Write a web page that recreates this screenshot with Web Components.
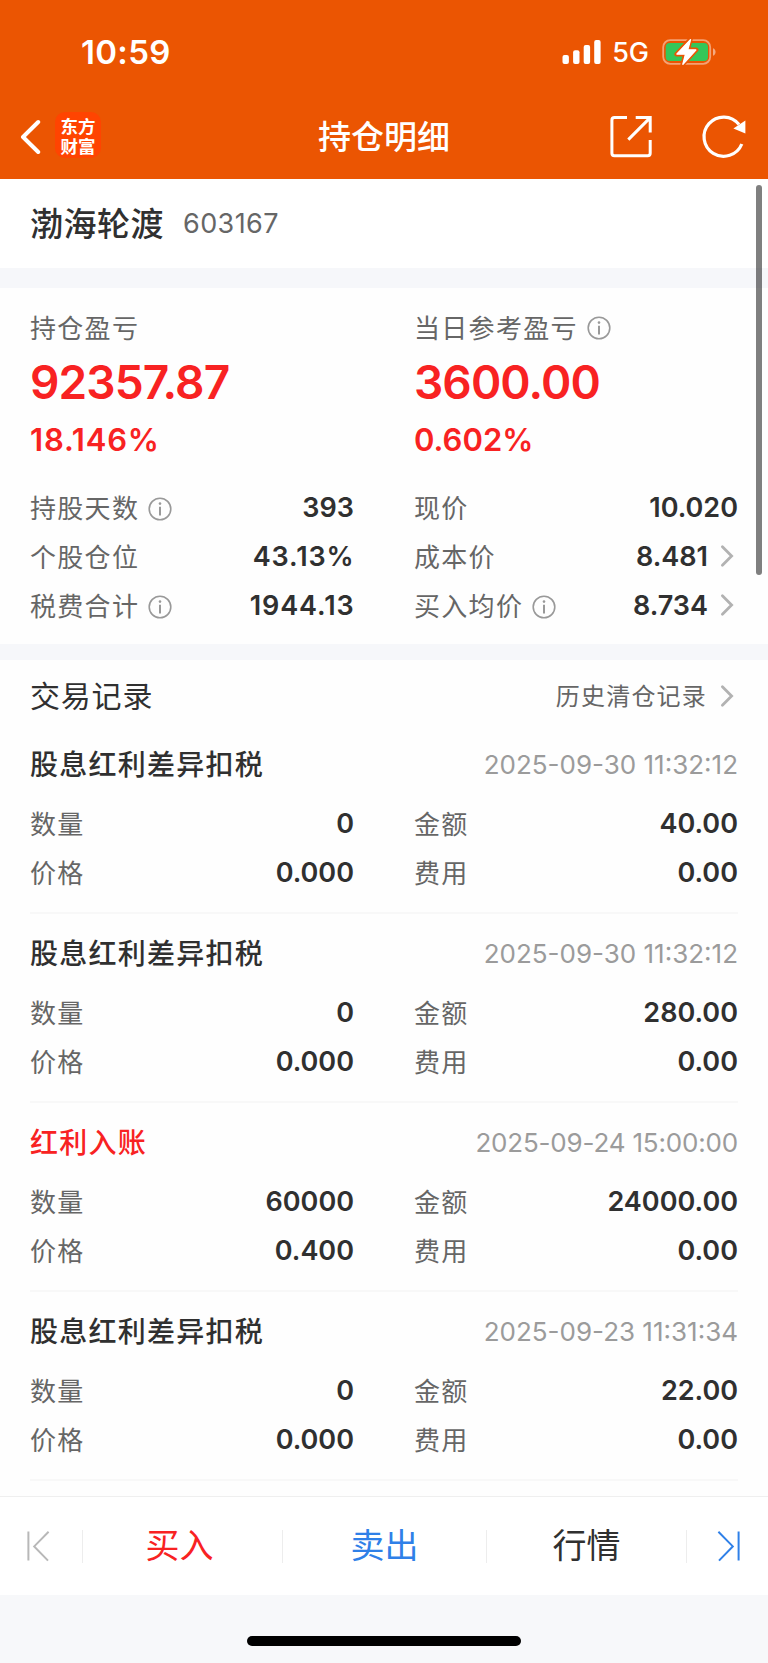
<!DOCTYPE html>
<html lang="zh-CN">
<head>
<meta charset="utf-8">
<meta name="viewport" content="width=device-width, initial-scale=1">
<title>持仓明细</title>
<style>
  :root {
    --brand: #eb5502;
    --red: #f82222;
    --blue: #2f80e8;
    --ink: #303030;
    --label: #666;
    --muted: #9b9b9b;
    --line: #f4f4f4;
    --band: #f6f7fa;
  }
  body {
    margin: 0;
    background: #fefefe;
    color: var(--ink);
    font-family: Inter, "Noto Sans CJK SC", sans-serif;
  }
</style>
</head>
<body>

<position-page></position-page>

<script>

const define = (name, markup) => {
  customElements.define(name, class extends HTMLElement {
    constructor() {
      super();
      this.attachShadow({ mode: "open" }).innerHTML = markup;
    }
  });
};

define("info-icon", `
  <style>
    :host { display: block; width: 24px; height: 24px; }
    svg { display: block; }
  </style>
  <svg width="24" height="24" viewBox="0 0 24 24" fill="none" stroke="#999" stroke-width="1.6">
    <circle cx="12" cy="12" r="10.8"/>
    <path d="M12 9.8V18.6" stroke-width="2"/>
    <circle cx="12" cy="6.6" r="1.3" fill="#999" stroke="none"/>
  </svg>
`);

define("chevron-icon", `
  <style>
    :host { display: block; width: 18px; height: 24px; }
    svg { display: block; }
  </style>
  <svg width="18" height="24" viewBox="0 0 18 24" fill="none" stroke="#b2b2b2" stroke-width="2.8" stroke-linecap="round">
    <path d="M2.4 2.8L11.6 12L2.4 21.2"/>
  </svg>
`);

define("status-bar", `
  <style>
    :host { display: flex; box-sizing: border-box; height: 94px; padding: 9px 51px 0 81px; align-items: center; justify-content: space-between; color: #fff; }
    .time { font-size: 33px; font-weight: 600; letter-spacing: 0.3px; }
    .right { display: flex; align-items: center; }
    .net { margin: 2px 12px 0 11px; font-size: 27px; font-weight: 500; }
    svg { display: block; }
  </style>
  <span class="time">10:59</span>
  <div class="right">
    <svg width="40" height="26" viewBox="0 0 40 26" fill="#fff">
      <rect x="1.5" y="16" width="6.4" height="9" rx="2"/>
      <rect x="12.1" y="11.3" width="6.4" height="13.7" rx="2"/>
      <rect x="22.7" y="6" width="6.4" height="19" rx="2"/>
      <rect x="33.2" y="1" width="6.4" height="24" rx="2"/>
    </svg>
    <span class="net">5G</span>
    <svg width="56" height="30" viewBox="661 36 56 30">
      <rect x="663.2" y="39.2" width="47" height="23.6" rx="7" fill="none" stroke="#fff" stroke-opacity=".45" stroke-width="1.8"/>
      <rect x="665.7" y="42" width="42.3" height="18" rx="4" fill="#34c759"/>
      <path d="M713 47.2C716.4 48.4 716.4 53.6 713 54.8Z" fill="#fff" fill-opacity=".5"/>
      <path d="M690.5 38.2L676.6 53.2H685.4L682.6 63.6L696.2 48.8H687.8Z" fill="#fff" stroke="#eb5502" stroke-width="4.5" stroke-linejoin="round" paint-order="stroke"/>
      <path d="M690.5 38.7L677 53H685.6L682.9 63.2L695.8 49H687.6Z" fill="#fff" stroke="#fff" stroke-width="1.4" stroke-linejoin="round"/>
    </svg>
  </div>
`);

define("nav-bar", `
  <style>
    :host { display: grid; grid-template-columns: 1fr auto 1fr; height: 85px; padding: 0 20px; align-items: center; color: #fff; }
    .left, .right { display: flex; align-items: center; }
    .right { justify-content: flex-end; gap: 46px; margin-right: 2px; }
    .title { padding-bottom: 4px; font-size: 33px; font-weight: 500; }
    .logo { display: flex; flex-direction: column; box-sizing: border-box; justify-content: center; width: 46px; height: 46px; margin: -3px 0 0 14px; padding-top: 3px; border-radius: 10px; background: #ff4401; text-align: center; font-size: 17.5px; font-weight: 700; line-height: 19.5px; }
    svg { display: block; }
  </style>
  <div class="left">
    <svg width="21" height="36" viewBox="20 118 21 36" fill="none" stroke="#fff" stroke-width="4" stroke-linecap="round" stroke-linejoin="round">
      <path d="M38.2 121L23 136L38.2 151"/>
    </svg>
    <div class="logo"><span>东方</span><span>财富</span></div>
  </div>
  <span class="title"><slot></slot></span>
  <div class="right">
    <svg width="46" height="46" viewBox="608 114 46 46" fill="none" stroke="#fff" stroke-width="3">
      <path d="M627 117.6H614.5Q611.9 117.6 611.9 120.2V153.2Q611.9 155.8 614.5 155.8H647.6Q650.2 155.8 650.2 153.2V140"/>
      <path d="M635.7 117.6H650.2V132.4M650.2 117.6L628.3 139.6"/>
    </svg>
    <svg width="46" height="46" viewBox="700 114 46 46">
      <path d="M741.8 144A19.6 19.6 0 1 1 739 124.5" fill="none" stroke="#fff" stroke-width="3.2"/>
      <path d="M745.4 120.6V133.4L733.4 128.4Z" fill="#fff"/>
    </svg>
  </div>
`);

define("stock-title", `
  <style>
    :host { display: flex; box-sizing: border-box; height: 89px; padding: 0 30px; align-items: center; background: #fff; }
    .name { padding-bottom: 4px; font-size: 33px; font-weight: 500; letter-spacing: 0.5px; }
    .code { margin-left: 19px; font-size: 27px; letter-spacing: 0.4px; color: var(--label); }
  </style>
  <span class="name"><slot></slot></span>
  <span class="code"><slot name="code"></slot></span>
`);

define("profit-figure", `
  <style>
    :host { display: block; }
    .label { display: flex; height: 40px; align-items: center; gap: 9px; font-size: 26px; letter-spacing: 1.3px; color: var(--label); }
    .text { padding-bottom: 4px; }
    ::slotted(info-icon) { margin-top: -1px; }
    .amount, .rate { color: var(--red); font-weight: 600; }
    .amount { font-size: 46px; line-height: 68px; letter-spacing: -0.9px; }
    .rate { font-size: 31px; line-height: 47px; letter-spacing: var(--rate-spacing, 0); }
  </style>
  <div class="label"><span class="text"><slot></slot></span><slot name="icon"></slot></div>
  <div class="amount"><slot name="amount"></slot></div>
  <div class="rate"><slot name="rate"></slot></div>
`);

define("field-row", `
  <style>
    :host { display: flex; height: 49px; align-items: center; }
    .label { padding-bottom: 3px; font-size: 26px; letter-spacing: 1.3px; color: var(--label); }
    .value { margin-left: auto; font-size: 27px; font-weight: 600; letter-spacing: 0; }
    /* values with many narrow 1s are set a little wider */
    :host([wide]) .value { letter-spacing: 0.9px; margin-right: -0.6px; }
    ::slotted(info-icon) { margin: 2px 0 0 9px; }
    ::slotted(chevron-icon) { margin: -1px 0 0 12px; }
  </style>
  <span class="label"><slot></slot></span>
  <slot name="icon"></slot>
  <span class="value"><slot name="value"></slot></span>
  <slot name="more"></slot>
`);

define("two-columns", `
  <style>
    :host { display: grid; grid-template-columns: 324px 324px; column-gap: 60px; }
  </style>
  <slot></slot>
`);

define("records-head", `
  <style>
    :host { display: flex; box-sizing: border-box; height: 65px; padding: 7px 0 0; align-items: center; justify-content: space-between; }
    .title { padding-bottom: 4px; font-size: 30px; letter-spacing: 0.8px; }
    .more { display: flex; align-items: center; gap: 13px; font-size: 24px; letter-spacing: 1.2px; color: var(--label); }
    .text { padding-bottom: 4px; }
  </style>
  <span class="title"><slot></slot></span>
  <span class="more"><span class="text"><slot name="more"></slot></span><chevron-icon></chevron-icon></span>
`);

class tradeRecord extends HTMLElement {

  constructor() {
    super();
    const shadowRoot = this.attachShadow({ mode: "open" });
    const get = (name) => this.getAttribute(name);
    shadowRoot.innerHTML = `
      <style>
        :host { display: block; box-sizing: border-box; height: 189px; padding-top: 14px; border-bottom: 2px solid #f8f8f8; }
        .head { display: flex; height: 50px; margin-bottom: 10px; align-items: center; justify-content: space-between; }
        .type { padding-bottom: 2px; font-size: 28px; font-weight: 500; letter-spacing: 1.25px; }
        :host([income]) .type { color: var(--red); }
        .time { font-size: 26px; color: var(--muted); }
        :host([income]) .time { letter-spacing: -0.18px; }
      </style>
      <div class="head">
        <span class="type">${get("type")}</span>
        <span class="time">${get("time")}</span>
      </div>
      <two-columns>
        <field-row>数量<span slot="value">${get("count")}</span></field-row>
        <field-row>金额<span slot="value">${get("amount")}</span></field-row>
        <field-row>价格<span slot="value">${get("price")}</span></field-row>
        <field-row>费用<span slot="value">${get("fee")}</span></field-row>
      </two-columns>
    `;
  }

}

define("action-bar", `
  <style>
    :host { display: grid; grid-template-columns: 83px 200px 204px 200px 81px; box-sizing: border-box; height: 99px; border-top: 1px solid #efefef; align-items: center; background: #fff; font-size: 34px; }
    div { display: flex; box-sizing: border-box; height: 33px; align-items: center; justify-content: center; border-right: 1px solid #ededed; }
    div:last-child { border: 0; }
    span { padding-bottom: 5px; }
    .buy { padding-right: 6px; color: var(--red); }
    .sell { color: var(--blue); }
    svg { display: block; }
  </style>
  <div><svg width="26" height="34" viewBox="0 0 26 34" fill="none" stroke="#b8b8b8" stroke-width="2" style="margin-right:6px">
    <path d="M3.4 2.6V31.6M23.6 2.8L9.2 17.4L23 31.6"/>
  </svg></div>
  <div class="buy"><span>买入</span></div>
  <div class="sell"><span>卖出</span></div>
  <div><span>行情</span></div>
  <div><svg width="26" height="34" viewBox="0 0 26 34" fill="none" stroke="#2f80e8" stroke-width="2" style="margin-left:3px">
    <path d="M22.6 2.6V31.6M2.4 2.8L16.8 17.4L3 31.6"/>
  </svg></div>
`);

define("position-page", `
  <style>
    :host { display: block; position: relative; height: 1663px; overflow: hidden; }
    header { height: 179px; background: var(--brand); }
    .band { background: var(--band); }
    .summary { box-sizing: border-box; height: 356px; padding: 20px 30px 0; }
    .fields { margin-top: 20px; }
    .records { height: 836px; padding: 0 30px; }
    .home { display: flex; height: 68px; justify-content: center; align-items: flex-end; background: #f7f8fa; }
    .home i { width: 274px; height: 10px; margin-bottom: 17px; border-radius: 5px; background: #000; }
    .scrollbar { position: absolute; top: 185px; right: 6px; width: 6px; height: 390px; border-radius: 3px; background: rgba(0, 0, 0, 0.5); }
  </style>

  <header>
    <status-bar></status-bar>
    <nav-bar>持仓明细</nav-bar>
  </header>

  <stock-title>渤海轮渡<span slot="code">603167</span></stock-title>
  <div class="band" style="height:20px"></div>

  <section class="summary">
    <two-columns>
      <profit-figure style="--rate-spacing:0.8px">持仓盈亏<span slot="amount">92357.87</span><span slot="rate">18.146%</span></profit-figure>
      <profit-figure>当日参考盈亏<info-icon slot="icon"></info-icon><span slot="amount">3600.00</span><span slot="rate">0.602%</span></profit-figure>
    </two-columns>
    <two-columns class="fields">
      <field-row>持股天数<info-icon slot="icon"></info-icon><span slot="value">393</span></field-row>
      <field-row>现价<span slot="value">10.020</span></field-row>
      <field-row wide>个股仓位<span slot="value">43.13%</span></field-row>
      <field-row>成本价<span slot="value">8.481</span><chevron-icon slot="more"></chevron-icon></field-row>
      <field-row wide>税费合计<info-icon slot="icon"></info-icon><span slot="value">1944.13</span></field-row>
      <field-row>买入均价<info-icon slot="icon"></info-icon><span slot="value">8.734</span><chevron-icon slot="more"></chevron-icon></field-row>
    </two-columns>
  </section>
  <div class="band" style="height:16px"></div>

  <section class="records">
    <records-head>交易记录<span slot="more">历史清仓记录</span></records-head>
    <trade-record type="股息红利差异扣税" time="2025-09-30 11:32:12" count="0" amount="40.00" price="0.000" fee="0.00"></trade-record>
    <trade-record type="股息红利差异扣税" time="2025-09-30 11:32:12" count="0" amount="280.00" price="0.000" fee="0.00"></trade-record>
    <trade-record income type="红利入账" time="2025-09-24 15:00:00" count="60000" amount="24000.00" price="0.400" fee="0.00"></trade-record>
    <trade-record type="股息红利差异扣税" time="2025-09-23 11:31:34" count="0" amount="22.00" price="0.000" fee="0.00"></trade-record>
  </section>

  <action-bar></action-bar>
  <div class="home"><i></i></div>
  <div class="scrollbar"></div>
`);

customElements.define("trade-record", tradeRecord);

</script>
</body>
</html>
